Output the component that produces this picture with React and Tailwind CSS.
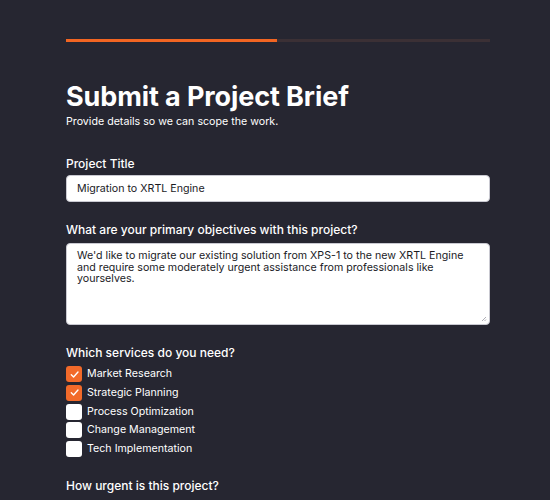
export default function App() {
  const services = [
    { label: "Market Research", checked: true },
    { label: "Strategic Planning", checked: true },
    { label: "Process Optimization", checked: false },
    { label: "Change Management", checked: false },
    { label: "Tech Implementation", checked: false },
  ];
  return (
    <div className="min-h-[500px] bg-[#262631] text-white" style={{ fontFamily: "Inter, 'Noto Sans', sans-serif" }}>
      <div className="ml-[66px] w-[424px] pt-[39px]">
        <div className="flex h-[3px]">
          <div className="w-[211px] bg-[#f26522]" />
          <div className="flex-1 bg-[#3b3035]" />
        </div>
        <h1 className="mt-[39px] text-[27px] font-bold leading-[32px] tracking-[-0.1px]">Submit a Project Brief</h1>
        <p className="mt-[2px] text-[10.67px] leading-[14px]">Provide details so we can scope the work.</p>

        <label className="mt-[27px] block text-[12px] font-medium leading-[16px]">Project Title</label>
        <div className="mt-[3px] flex h-[27px] items-center rounded-[4px] border border-[#c9c9d1] bg-white px-[10px] text-[10.67px] text-[#1b1b1f]">
          Migration to XRTL Engine
        </div>

        <label className="mt-[20px] block text-[12px] font-medium leading-[16px]">What are your primary objectives with this project?</label>
        <div className="relative mt-[5px] h-[82px] rounded-[4px] border border-[#c9c9d1] bg-white px-[10px] py-[6px] text-[10.67px] leading-[11.7px] text-[#1b1b1f]">
          We'd like to migrate our existing solution from XPS-1 to the new XRTL Engine and require some moderately urgent assistance from professionals like yourselves.
          <svg className="absolute bottom-[2px] right-[2px]" width="6" height="6" viewBox="0 0 6 6">
            <path d="M5 1 L1 5 M5 3.5 L3.5 5" stroke="#9a9aa3" strokeWidth="0.8" />
          </svg>
        </div>

        <label className="mt-[20px] block text-[12px] font-medium leading-[16px]">Which services do you need?</label>
        <div className="mt-[5px] flex flex-col gap-[2.75px]">
          {services.map((s) => (
            <div key={s.label} className="flex h-[16px] items-center gap-[5px]">
              {s.checked ? (
                <div className="flex h-[16px] w-[16px] items-center justify-center rounded-[3px] bg-[#f26a2a]">
                  <svg width="11" height="11" viewBox="0 0 12 12" fill="none">
                    <path d="M2.5 6.3 L5 8.7 L9.8 3.3" stroke="white" strokeWidth="1.5" strokeLinecap="round" strokeLinejoin="round" />
                  </svg>
                </div>
              ) : (
                <div className="h-[16px] w-[16px] rounded-[3px] bg-white" />
              )}
              <span className="text-[10.67px] leading-[16px]">{s.label}</span>
            </div>
          ))}
        </div>

        <label className="mt-[21px] block text-[12px] font-medium leading-[16px]">How urgent is this project?</label>
      </div>
    </div>
  );
}
